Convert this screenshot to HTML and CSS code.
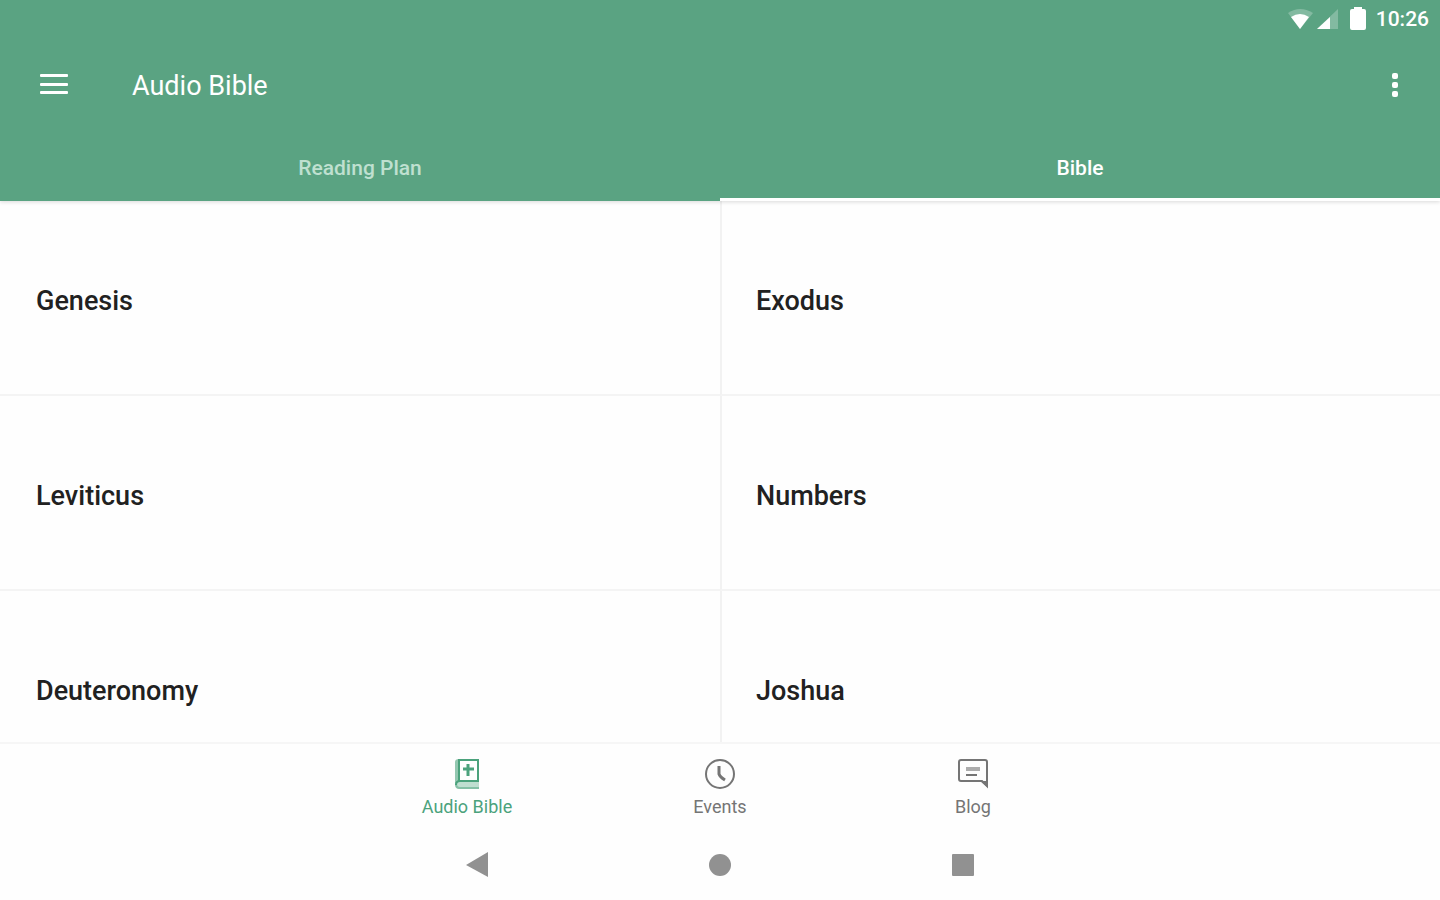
FILE: index.html
```html
<!DOCTYPE html>
<html lang="en">
<head>
  <meta charset="UTF-8" />
  <meta name="viewport" content="width=device-width, initial-scale=1" />
  <title>Audio Bible</title>
  <link rel="stylesheet" href="styles.css">
</head>
<body>

  <header class="header">
    <div class="status-bar">
      <svg width="52" height="24" viewBox="0 0 52 24" aria-hidden="true">
        <path d="M0 6Q12-2 25 6L12 22Z" fill="#fff" opacity=".25"/>
        <path d="M3 10Q12 4 21 10L12 22Z" fill="#fff"/>
        <path d="M50 2V22H29Z" fill="#fff" opacity=".25"/>
        <path d="M42 10V22H29Z" fill="#fff"/>
      </svg>
      <svg width="16" height="24" viewBox="0 0 16 24" aria-hidden="true">
        <path d="M4 0h8v2h2q2 0 2 2v17q0 2-2 2H2q-2 0-2-2V4q0-2 2-2h2z" fill="#fff"/>
      </svg>
      <time>10:26</time>
    </div>

    <div class="toolbar">
      <button type="button" class="icon-button" aria-label="Menu">
        <svg width="28" height="24" viewBox="0 0 28 24" fill="#fff"><rect y="1" width="28" height="3" rx="1"/><rect y="10" width="28" height="3" rx="1"/><rect y="18" width="28" height="3" rx="1"/></svg>
      </button>
      <h1>Audio Bible</h1>
      <button type="button" class="icon-button" aria-label="More options">
        <svg width="6" height="26" viewBox="0 0 6 26" fill="#fff"><rect y="1" width="6" height="6" rx="2"/><rect y="10" width="6" height="6" rx="2"/><rect y="19" width="6" height="6" rx="2"/></svg>
      </button>
    </div>

    <div class="tabs" role="tablist">
      <button type="button" class="tab" role="tab" aria-selected="false">Reading Plan</button>
      <button type="button" class="tab active" role="tab" aria-selected="true">Bible</button>
    </div>
  </header>

  <main class="books">
    <a class="book" href="#genesis">Genesis</a>
    <a class="book" href="#exodus">Exodus</a>
    <a class="book" href="#leviticus">Leviticus</a>
    <a class="book" href="#numbers">Numbers</a>
    <a class="book" href="#deuteronomy">Deuteronomy</a>
    <a class="book" href="#joshua">Joshua</a>
  </main>

  <nav class="bottom-nav">
    <a class="nav-item active" href="#audio-bible">
      <svg width="32" height="32" viewBox="0 0 32 32" fill="none" stroke="currentColor" stroke-width="2">
        <path d="M4 27V4q0-3 4-3v22q-3 0-4 4z" fill="currentColor" stroke="none" opacity=".6"/>
        <path d="M8 24V2h19v22"/>
        <path d="M28 23H8q-4 0-4 4t4 4h20z" fill="currentColor" stroke="none" opacity=".35"/>
        <path d="M28 23H9q-4 0-4 4"/>
        <path d="M5 26q0 4 4 4h19" opacity=".5"/>
        <path d="M17 6v12M12 11h11" stroke-width="3"/>
      </svg>
      Audio Bible
    </a>
    <a class="nav-item" href="#events">
      <svg width="32" height="32" viewBox="0 0 32 32" fill="none" stroke="currentColor" stroke-width="2">
        <circle cx="16" cy="16" r="14"/>
        <path d="M15 8v8q1 3 6 6" stroke-width="3"/>
      </svg>
      Events
    </a>
    <a class="nav-item" href="#blog">
      <svg width="32" height="32" viewBox="0 0 32 32" fill="none" stroke="currentColor" stroke-width="2">
        <path d="M4 2h24q2 0 2 2v24l-5-5H4q-2 0-2-2V4q0-2 2-2z"/>
        <path d="M30 29l-7-6h7z" fill="currentColor" stroke="none"/>
        <path d="M9 11h14" stroke-width="4" opacity=".6"/>
        <path d="M9 17h11"/>
      </svg>
      Blog
    </a>
  </nav>

  <div class="system-nav">
    <button type="button" aria-label="Back"><svg width="24" height="26" viewBox="0 0 24 26" fill="#919191"><path d="M23 0v25L1 13z"/></svg></button>
    <button type="button" aria-label="Home"><svg width="24" height="24" viewBox="0 0 24 24" fill="#919191"><circle cx="12" cy="12" r="11"/></svg></button>
    <button type="button" aria-label="Recent apps"><svg width="24" height="24" viewBox="0 0 24 24" fill="#919191"><rect x="1" y="1" width="22" height="22" rx="1"/></svg></button>
  </div>

</body>
</html>
```

FILE: styles.css
```css
* {
  box-sizing: border-box;
}
body {
  margin: 0;
  height: 100vh;
  display: flex;
  flex-direction: column;
  font-family: Roboto, sans-serif;
  background-color: #fefefe;
  color: #212121;
}
svg {
  display: block;
}
a {
  color: inherit;
  text-decoration: none;
}
button {
  padding: 0;
  border: none;
  background: none;
  font-family: inherit;
}
.header {
  flex: none;
  background-color: #5aa382;
  color: #fff;
  box-shadow: 0 1px 4px rgba(0,0,0,0.15);
  z-index: 1;
}
.status-bar {
  display: flex;
  align-items: center;
  justify-content: flex-end;
  gap: 10px;
  height: 38px;
  padding-right: 11px;
  font-size: 21px;
  font-weight: 500;
}
.toolbar {
  display: flex;
  align-items: center;
  height: 94px;
  padding: 0 32px;
}
.icon-button {
  display: flex;
  justify-content: center;
  width: 44px;
}
.icon-button:last-child {
  width: 26px;
}
.toolbar h1 {
  flex: 1;
  margin: 0;
  padding: 2px 0 0 56px;
  font-size: 27px;
  font-weight: 400;
}
.tabs {
  display: flex;
}
.tab {
  flex: 1;
  height: 69px;
  padding-top: 6px;
  border-bottom: 3px solid transparent;
  font-size: 21px;
  font-weight: 500;
  color: #bfe0d0;
}
.tab.active {
  border-color: #fff;
  color: #fff;
}
.books {
  flex: 1;
  min-height: 0;
  overflow: hidden;
  display: grid;
  grid-template-columns: 1fr 1fr;
  grid-auto-rows: 195px;
}
.book {
  display: flex;
  align-items: center;
  padding: 6px 36px 0;
  border-bottom: 2px solid #f4f4f4;
  font-size: 27px;
  font-weight: 500;
}
.book:nth-child(even) {
  padding-left: 34px;
  border-left: 2px solid #f2f2f2;
}
.bottom-nav {
  flex: none;
  display: flex;
  justify-content: center;
  height: 87px;
  padding-top: 14px;
  border-top: 2px solid #f6f6f6;
}
.nav-item {
  display: flex;
  flex-direction: column;
  align-items: center;
  gap: 6px;
  width: 253px;
  font-size: 18px;
  line-height: 22px;
  color: #757575;
}
.nav-item.active {
  color: #4ba27c;
}
.system-nav {
  flex: none;
  display: flex;
  justify-content: center;
  height: 71px;
}
.system-nav button {
  display: flex;
  align-items: center;
  justify-content: center;
  width: 243px;
}
```
